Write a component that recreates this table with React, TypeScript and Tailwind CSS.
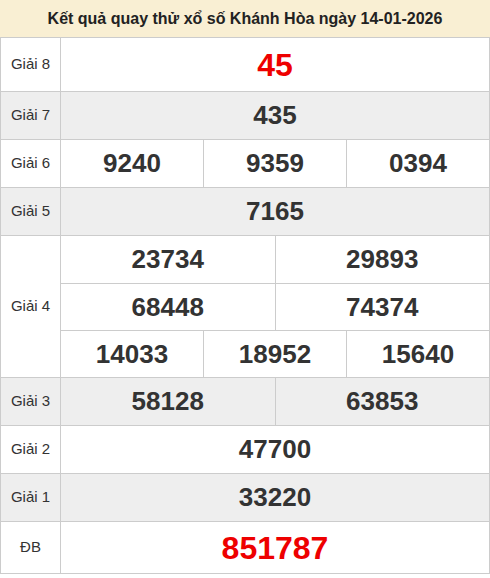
import React from 'react'

interface Row {
  label: string
  cells: string[][]
  red?: boolean
  h: string
}

const rows: Row[] = [
  { label: 'Giải 8', cells: [['45']], red: true, h: 'h-[53px]' },
  { label: 'Giải 7', cells: [['435']], h: 'h-[47px]' },
  { label: 'Giải 6', cells: [['9240', '9359', '0394']], h: 'h-[47px]' },
  { label: 'Giải 5', cells: [['7165']], h: 'h-[47px]' },
  { label: 'Giải 4', cells: [['23734', '29893'], ['68448', '74374'], ['14033', '18952', '15640']], h: 'h-[47px]' },
  { label: 'Giải 3', cells: [['58128', '63853']], h: 'h-[47px]' },
  { label: 'Giải 2', cells: [['47700']], h: 'h-[47px]' },
  { label: 'Giải 1', cells: [['33220']], h: 'h-[47px]' },
  { label: 'ĐB', cells: [['851787']], red: true, h: 'h-[51px]' },
]

export default function App() {
  return (
    <div className="w-[490px] bg-white text-[#333]" style={{ fontFamily: '"Liberation Sans", Arial, sans-serif' }}>
      <div className="h-[37px] bg-[#f9efd3] flex items-center justify-center text-[16px] font-bold text-[#222]">
        Kết quả quay thử xổ số Khánh Hòa ngày 14-01-2026
      </div>
      <div className="border border-[#cccccc]">
        {rows.map((r, i) => (
          <div
            key={r.label}
            className={`flex ${i > 0 ? 'border-t border-[#cccccc]' : ''} ${i % 2 === 1 ? 'bg-[#eeeeee]' : 'bg-white'}`}
          >
            <div className="w-[60px] shrink-0 border-r border-[#cccccc] flex items-center justify-center text-[15px]">
              {r.label}
            </div>
            <div className="flex-1 flex flex-col">
              {r.cells.map((line, li) => (
                <div key={li} className={`flex ${r.h} ${li > 0 ? 'border-t border-[#cccccc]' : ''}`}>
                  {line.map((n, ni) => (
                    <div
                      key={ni}
                      className={`flex-1 basis-0 flex items-center justify-center font-bold ${ni > 0 ? 'border-l border-[#cccccc]' : ''} ${r.red ? 'text-[#ee0000] text-[32px]' : 'text-[26px]'}`}
                    >
                      {n}
                    </div>
                  ))}
                </div>
              ))}
            </div>
          </div>
        ))}
      </div>
    </div>
  )
}
